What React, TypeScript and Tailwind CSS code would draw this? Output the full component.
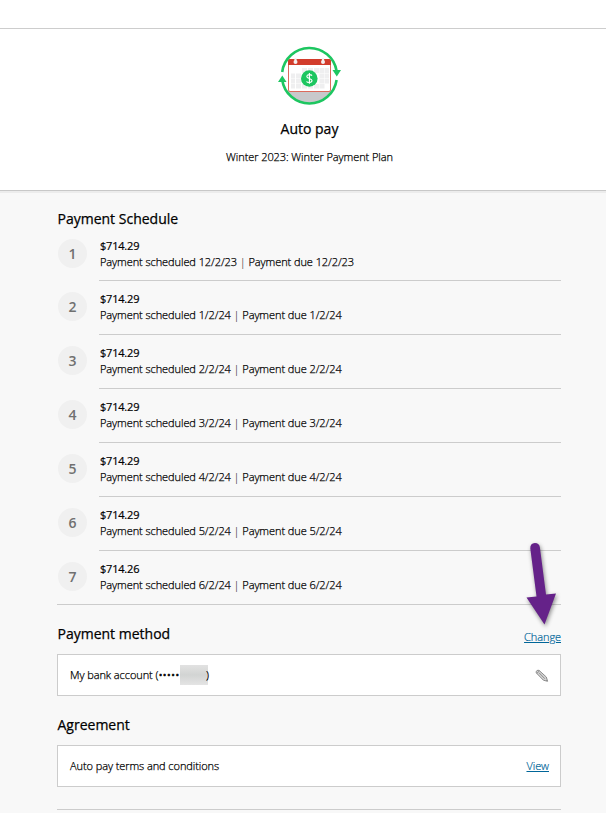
import React from 'react';

const payments = [
  { amount: '$714.29', date: '12/2/23' },
  { amount: '$714.29', date: '1/2/24' },
  { amount: '$714.29', date: '2/2/24' },
  { amount: '$714.29', date: '3/2/24' },
  { amount: '$714.29', date: '4/2/24' },
  { amount: '$714.29', date: '5/2/24' },
  { amount: '$714.26', date: '6/2/24' },
];

const AutoPayIcon: React.FC = () => (
  <svg className="ml-0.5" width="64" height="60" viewBox="0 0 64 60" fill="none">
    <path d="M8 45 Q14 56.5 31 57 Q48 56.5 55 45 Z" fill="#c8c8cb" />
    <rect x="10.5" y="13.5" width="42" height="32" rx="1.5" fill="#fff" stroke="#dc6a5c" />
    <path d="M10 19 V15 Q10 13 12 13 H51 Q53 13 53 15 V19 Z" fill="#d23c2c" />
    <g fill="#efeff0">
      <path d="M24 22h5v5h-5zM30 22h5v5h-5zM36 22h5v5h-5zM41.500 22h5v5h-5zM47 22h4v5h-4z" />
      <path d="M13 27.500h4v5h-4zM18 27.500h5v5h-5zM41.500 27.500h5v5h-5zM47 27.500h4v5h-4z" />
      <path d="M13 33h4v4.500h-4zM18 33h5v4.500h-5zM41.500 33h5v4.500h-5zM47 33h4v4.500h-4z" />
      <path d="M13 38h4v4.500h-4zM18 38h5v4.500h-5zM24 38h5v4.500h-5zM30 38h5v4.500h-5zM36 38h5v4.500h-5zM41.500 38h5v4.500h-5z" />
    </g>
    <g fill="#f4eeee">
      <circle cx="17.500" cy="16" r="2" />
      <circle cx="45" cy="16" r="2" />
      <rect x="16.400" y="12" width="2.200" height="4" rx="1" />
      <rect x="43.900" y="12" width="2.200" height="4" rx="1" />
    </g>
    <path d="M4.200 26 A27.500 27.500 0 0 1 58.600 25" stroke="#1dc660" strokeWidth="2.600" />
    <path d="M58.600 34 A27.500 27.500 0 0 1 4.200 34" stroke="#1dc660" strokeWidth="2.600" />
    <path d="M54.500 24 H63 L58.800 30.500 Z" fill="#1dc660" />
    <path d="M0 36 H8.500 L4.300 29.500 Z" fill="#1dc660" />
    <circle cx="31.300" cy="32.500" r="8.300" fill="#1dc660" />
    <path d="M34 29.600 C33.200 28.400 28.900 28 28.800 30.400 C28.800 32.900 34 32 34 34.600 C34 37.100 29.500 37 28.500 35.500 M31.400 27.100 V37.800" stroke="#fff" strokeWidth="1.100" />
  </svg>
);

const PencilIcon: React.FC = () => (
  <svg className="mt-0.5" width="14" height="14" viewBox="0 0 14 14" fill="#d4d4d4" stroke="#8c8c8c" strokeWidth="1">
    <path d="M1.300 3.900 Q.8 2.800 1.800 1.700 Q3 .8 4.200 1.500 L11.300 8 L12.600 12.300 L8.400 11.200 Z" />
    <path d="M1.900 4.300 L4.500 1.800 M4.200 3.900 L9.800 9.700 M11.200 12 L12.200 11" fill="none" />
  </svg>
);

const Arrow: React.FC = () => (
  <svg
    className="pointer-events-none absolute top-[537px] left-[518px] drop-shadow-[1px_2px_2px_rgba(0,0,0,0.45)]"
    width="44"
    height="94"
    viewBox="0 0 44 94"
    fill="#652289"
  >
    <path d="M12.300 11.500 Q12 6.200 16.900 6 Q21.400 6 21.900 10.500 L28 57.500 L38 56.500 L26.500 87.500 L8.500 60.500 L18.500 59.500 Z" />
  </svg>
);

const App: React.FC = () => {
  return (
    <div className="relative h-[813px] overflow-hidden bg-[#f8f8f8] font-['Open_Sans',sans-serif] text-[11px] leading-4 font-light tracking-[-0.075px] text-black">
      <div className="h-[29px] border-b border-[#cdcdcd] bg-white" />
      <header className="h-[162px] border-b border-[#c8c8c8] bg-white pt-[17px] pr-[45px] pl-[57px] shadow-[0_2px_0_#ececec]">
        <div className="flex flex-col items-center">
          <AutoPayIcon />
          <h1 className="mt-[13px] pl-px text-sm leading-5 font-normal tracking-normal [-webkit-text-stroke:0.25px_black]">Auto pay</h1>
          <p className="mt-[10px] pl-px [-webkit-text-stroke:0.25px_black]">Winter 2023: Winter Payment Plan</p>
        </div>
      </header>

      <main className="mr-[45px] ml-[57px]">
        <h2 className="pt-[18px] pl-[0.5px] text-sm leading-5 font-normal tracking-normal [-webkit-text-stroke:0.25px_black]">Payment Schedule</h2>
        <ol className="border-b border-[#cccccc]">
          {payments.map((payment, i) => (
            <li key={payment.date} className="group flex h-[54px] first:h-[52px] last:h-[53px]">
              <span className="mt-[11px] ml-px flex h-[29px] w-[29px] shrink-0 items-center justify-center rounded-full bg-[#f0f0f0] pt-px text-sm leading-5 font-semibold text-[#707070] group-first:mt-[10px]">
                {i + 1}
              </span>
              <div className="ml-3 flex-1 border-b border-[#cccccc] pt-[10px] pl-px group-first:pt-[9px] group-last:border-b-0">
                <p className="font-normal tracking-[-0.2px] [-webkit-text-stroke:0.2px_black]">{payment.amount}</p>
                <p className="[-webkit-text-stroke:0.25px_black]">
                  Payment scheduled {payment.date} <span className="[-webkit-text-stroke:0]">|</span> Payment due {payment.date}
                </p>
              </div>
            </li>
          ))}
        </ol>

        <section className="pt-[19px]">
          <div className="flex items-start justify-between">
            <h2 className="pl-[0.5px] text-sm leading-5 font-normal tracking-normal [-webkit-text-stroke:0.25px_black]">Payment method</h2>
            <a href="#" className="pt-[5px] text-[#006699] underline [-webkit-text-stroke:0.2px_#006699]">Change</a>
          </div>
          <div className="mt-[9px] flex h-[42px] items-center justify-between border border-[#cccccc] bg-white pr-[11px] pl-3">
            <span className="flex items-center [-webkit-text-stroke:0.25px_black]">
              My bank account (
              <span className="tracking-[0.05px] [-webkit-text-stroke:0.7px_black]">•••••</span>
              <span className="ml-[0.5px] h-5 w-7 bg-linear-to-b from-[#e2e2e2] via-[#d2d4d3] to-[#e4e4e4]" />
              <span className="-ml-0.5">)</span>
            </span>
            <PencilIcon />
          </div>
        </section>

        <section className="pt-[19px]">
          <h2 className="pl-[0.5px] text-sm leading-5 font-normal tracking-normal [-webkit-text-stroke:0.25px_black]">Agreement</h2>
          <div className="mt-[10px] flex h-[42px] items-center justify-between border border-[#cccccc] bg-white pr-[11px] pl-3">
            <span className="[-webkit-text-stroke:0.25px_black]">Auto pay terms and conditions</span>
            <a href="#" className="text-[#006699] underline [-webkit-text-stroke:0.2px_#006699]">View</a>
          </div>
        </section>
        <hr className="mt-[22px] border-[#cccccc]" />
      </main>

      <Arrow />
    </div>
  );
};

export default App;
